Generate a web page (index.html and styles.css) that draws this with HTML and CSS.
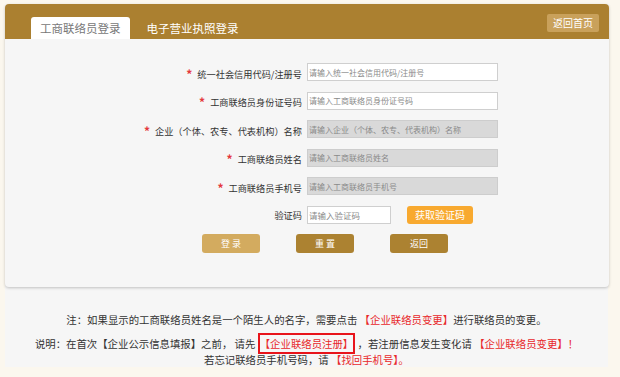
FILE: index.html
```html
<!DOCTYPE html>
<html lang="zh-CN">
<head>
<meta charset="utf-8">
<title>工商联络员登录</title>
<link rel="stylesheet" href="styles.css">
</head>
<body>
<div class="page">
  <div class="card">
    <div class="head">
      <div class="tabs">
        <span class="tab active">工商联络员登录</span>
        <span class="tab">电子营业执照登录</span>
      </div>
      <a class="home">返回首页</a>
    </div>
    <form class="body">
      <div class="row">
        <label class="label"><span class="star">*</span>统一社会信用代码/注册号</label>
        <input class="field" type="text" placeholder="请输入统一社会信用代码/注册号">
      </div>
      <div class="row">
        <label class="label"><span class="star">*</span>工商联络员身份证号码</label>
        <input class="field" type="text" placeholder="请输入工商联络员身份证号码">
      </div>
      <div class="row">
        <label class="label"><span class="star">*</span>企业（个体、农专、代表机构）名称</label>
        <input class="field off" type="text" placeholder="请输入企业（个体、农专、代表机构）名称" disabled>
      </div>
      <div class="row">
        <label class="label"><span class="star">*</span>工商联络员姓名</label>
        <input class="field off" type="text" placeholder="请输入工商联络员姓名" disabled>
      </div>
      <div class="row">
        <label class="label"><span class="star">*</span>工商联络员手机号</label>
        <input class="field off" type="text" placeholder="请输入工商联络员手机号" disabled>
      </div>
      <div class="row">
        <label class="label">验证码</label>
        <input class="field code" type="text" placeholder="请输入验证码">
        <button class="getcode" type="button">获取验证码</button>
      </div>
      <div class="actions">
        <button class="btn light" type="button">登 录</button>
        <button class="btn" type="button">重 置</button>
        <button class="btn" type="button">返回</button>
      </div>
    </form>
  </div>
  <div class="notes">
    <p>注：如果显示的工商联络员姓名是一个陌生人的名字，需要点击 <span class="red">【企业联络员变更】</span>进行联络员的变更。</p>
    <p class="second">说明：在首次【企业公示信息填报】之前， 请先 <span class="red boxed">【企业联络员注册】</span> ，若注册信息发生变化请 <span class="red">【企业联络员变更】！</span><br>若忘记联络员手机号码，请 <span class="red">【找回手机号】。</span></p>
  </div>
</div>
</body>
</html>
```

FILE: styles.css
```css
html, body {
  margin: 0;
  padding: 0;
  background: #fbf7ee;
  font-family: "Noto Sans CJK SC", "Liberation Sans", sans-serif;
  color: #333;
}

.page {
  width: 603px;
  margin: 4px 0 0 5px;
  background: #f6f6f6;
  height: 363px;
}

.card {
  background: #f6f6f6;
  border-radius: 4px;
  box-shadow: 0 1px 3px rgba(0, 0, 0, 0.22);
  width: 604px;
}

.head {
  height: 35px;
  background: #ab8030;
  border-radius: 4px 4px 0 0;
  display: flex;
  justify-content: space-between;
  padding: 0 10px 0 26px;
  box-sizing: border-box;
}

.tabs {
  display: flex;
  align-self: flex-end;
}

.tab {
  height: 22px;
  line-height: 22px;
  padding: 0 9px;
  font-size: 11.5px;
  color: #fff;
  margin-left: 8px;
}

.tab.active {
  background: #fff;
  color: #777;
  border-radius: 3px 3px 0 0;
  margin-left: 0;
}

.home {
  align-self: flex-start;
  margin-top: 10px;
  height: 18px;
  line-height: 18px;
  width: 52px;
  text-align: center;
  background: #c9a15b;
  color: #fff;
  font-size: 10px;
  border-radius: 2px;
}

.body {
  margin: 0;
  padding: 24px 0 34px;
  display: flex;
  flex-direction: column;
  gap: 10.6px;
}

.row {
  display: flex;
  align-items: center;
  height: 18px;
}

.label {
  width: 302px;
  padding-right: 5px;
  box-sizing: border-box;
  text-align: right;
  font-size: 9.2px;
  color: #333;
  white-space: nowrap;
}

.star {
  color: #e4393c;
  font-size: 12px;
  font-weight: bold;
  margin-right: 5px;
  position: relative;
  top: 1px;
}

.field {
  width: 191px;
  height: 18px;
  box-sizing: border-box;
  border: 1px solid #cfcfcf;
  background: #fff;
  padding: 0 1px;
  font-family: inherit;
  font-size: 8px;
  margin: 0;
  outline: none;
}

.field::placeholder {
  color: #8a8a8a;
}

.field.off {
  background: #d9d9d9;
  border-color: #cdcdcd;
}

.field.code {
  width: 84px;
  font-size: 8.5px;
}

.getcode {
  margin-left: 16px;
  width: 66px;
  height: 18px;
  border: none;
  border-radius: 3px;
  background: #f8a92f;
  color: #fff;
  font-family: inherit;
  font-size: 10px;
  padding: 0;
}

.actions {
  display: flex;
  gap: 36px;
  padding-left: 197px;
  margin-top: -0.6px;
}

.btn {
  width: 58px;
  height: 19px;
  border: none;
  border-radius: 3px;
  background: #ac8231;
  color: #fff;
  font-family: inherit;
  font-size: 9px;
  padding: 0;
}

.btn.light {
  background: #d3ab5f;
}

.notes {
  padding-top: 25px;
  text-align: center;
  font-size: 10.4px;
  color: #333;
}

.notes p {
  margin: 0;
  line-height: 16px;
}

.notes p.second {
  margin-top: 8px;
}

.red {
  color: #e8282b;
}

.boxed {
  border: 2px solid #e8141b;
  padding: 1px 0;
}
```
